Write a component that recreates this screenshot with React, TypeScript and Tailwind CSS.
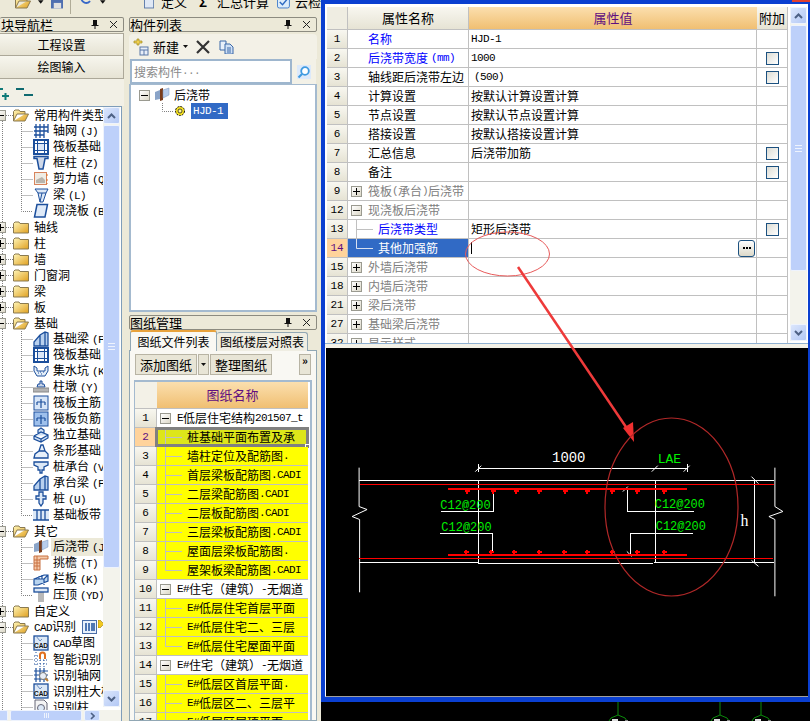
import React from "react";

const BLUE = "#1c4f9c";
const MONO = "font-['Liberation_Mono',monospace] text-[11px] tracking-[-0.6px]";

// SimSun style: half width latin next to full width CJK
function T({ s }: { s: string }) {
  const parts = s.match(/[\x20-\x7e]+|[^\x20-\x7e]+/g) || [];
  return (
    <>
      {parts.map((p, i) =>
        /^[\x20-\x7e]/.test(p) ? (
          <span key={i} className={`${MONO} whitespace-pre ${p.startsWith(" (") ? "ml-[3px]" : ""}`}>
            {p.startsWith(" (") ? p.slice(1) : p}
          </span>
        ) : (
          <span key={i}>{p}</span>
        )
      )}
    </>
  );
}

function Folder({ open }: { open?: boolean }) {
  return (
    <svg width="16" height="13" viewBox="0 0 16 13" className="shrink-0">
      <defs>
        <linearGradient id="fy" x1="0" y1="0" x2="1" y2="1">
          <stop offset="0" stopColor="#fff6b8" />
          <stop offset="1" stopColor="#e0a020" />
        </linearGradient>
      </defs>
      {open ? (
        <path d="M.5 12V2.500L2 1h4l1 1.500h5V5H4L.5 12h11.500L15.500 5H12" fill="url(#fy)" stroke="#8a7a50" />
      ) : (
        <path d="M.5 12V2.500L2 1h4l1 1.500h8.500V12z" fill="url(#fy)" stroke="#8a7a50" />
      )}
    </svg>
  );
}

function TreeIcon({ k }: { k: string }) {
  const s = { fill: "none", stroke: BLUE, strokeWidth: 1 };
  let c: React.ReactNode = null;
  switch (k) {
    case "grid":
      c = <path {...s} strokeWidth={1.300} d="M3 1v14M7 1v14M11 1v14M15 1v9M1 4h14M1 8h14M1 12h10" />;
      break;
    case "raft":
      c = (
        <>
          <rect x="1" y="1" width="14" height="14" fill="#fff" stroke={BLUE} strokeWidth="2" />
          <rect x="4.500" y="4.500" width="7" height="7" fill="#dde8f8" stroke={BLUE} />
          <path {...s} d="M1 4.500h14M1 11.500h14M4.500 1v14M11.500 1v14" />
        </>
      );
      break;
    case "column":
      c = <path d="M1 1.500h14v2h-3L10 14H6L4 3.500H1z" fill="#cfd8e8" stroke={BLUE} strokeWidth="1.500" />;
      break;
    case "wall":
      c = (
        <>
          <rect x="1.500" y="1.500" width="12" height="12" fill="#efece4" stroke="#d8845c" />
          <path d="M3 12h9v-3L9 6 3 9z" fill="#b8b4ac" />
          <path d="M14 3v2M14 8v2M14 12v1" stroke="#e07020" />
        </>
      );
      break;
    case "beam":
      c = <path d="M2 2h13l-2 4-3 9H7L5 6zM5 6h8M9 6l-2 9" fill="#dce8f6" stroke={BLUE} />;
      break;
    case "slab":
      c = <path d="M4 1.500h10.500L12 14H1.500z" fill="#dfeaf8" stroke={BLUE} strokeWidth="1.500" />;
      break;
    case "fbeam":
      c = <path d="M1 15V11l6-7 5-3 3 1v13zM7 4v11M12 1v14" fill="#b8d0ee" stroke={BLUE} strokeWidth="1.300" />;
      break;
    case "pit":
      c = (
        <>
          <path d="M1 3l3 2v3h8V5l3-2v5l-3 5H4L1 8z" fill="#e4eef8" stroke={BLUE} />
          <path d="M5 10h1M8 11h1M10 9h1M7 9h1" stroke={BLUE} />
        </>
      );
      break;
    case "pier":
      c = (
        <>
          <path d="M7 2h2v3h2l1 3H4l1-3h2z" fill="#c8d4e8" stroke={BLUE} />
          <rect x="0" y="9" width="16" height="4" fill="#b4b4b4" stroke="#888" />
        </>
      );
      break;
    case "main":
    case "neg":
      c = (
        <>
          <rect x="1" y="1" width="14" height="14" fill={k === "neg" ? "#9ec0ec" : "#d8e6f8"} stroke={BLUE} />
          <path d="M4 7h8M8 4v9M4 7v3M12 7v3" fill="none" stroke={BLUE} strokeWidth="1.200" />
        </>
      );
      break;
    case "iso":
      c = <path d="M1 9l7-4 7 3v3l-7 4-7-3zM1 9l7 3 7-4M8 12v3M5 7V3l3-2 3 2v4" fill="#cfe0f5" stroke={BLUE} strokeWidth="1.200" />;
      break;
    case "strip":
      c = <path d="M1 15l1-4 4-3 2-6h2l2 6 3 3v4zM6 8h6" fill="#e8f0fa" stroke={BLUE} strokeWidth="1.300" />;
      break;
    case "cap":
      c = <path d="M1 3h14v3l-4 2v3H9v3H7v-3H5V8L1 6z" fill="#dce8f6" stroke={BLUE} strokeWidth="1.300" />;
      break;
    case "pile":
      c = <path d="M6 1h4v4h3v3h-3v4l-2 3-2-3V8H3V5h3z" fill="#dce8f6" stroke={BLUE} strokeWidth="1.300" />;
      break;
    case "band":
      c = (
        <>
          <rect x="0" y="3" width="16" height="10" fill="#dce8f6" />
          <path d="M0 3h16M0 13h16M4 3v10M8 3v10M12 3v10" stroke={BLUE} strokeWidth="1.300" />
        </>
      );
      break;
    case "post":
      c = (
        <>
          <path d="M1 5l5-2v9l-5 1z" fill="#8aa4c8" />
          <path d="M6 2l3-1v12l-3 1z" fill="#7a3c1c" />
          <path d="M9 3l6-2v7l-6 3z" fill="#b8cdec" stroke="#7a94bc" strokeWidth=".500" />
        </>
      );
      break;
    case "eave":
      c = (
        <>
          <path d="M1 1h14v3H7v11H1z" fill="#f4c8a8" stroke="#c87040" />
          <path d="M1 5h6M1 8h6M1 11h6M4 1v14" stroke="#c87040" />
        </>
      );
      break;
    case "rail":
      c = <path d="M1 8l10-4h4v6l-10 4H1zM1 8h10l4-4M11 8v6M6 8V5M9 8V4" fill="#b8d4f0" stroke={BLUE} strokeWidth="1.200" />;
      break;
    case "coping":
      c = (
        <>
          <rect x="5" y="4" width="6" height="11" fill="#b8b8b8" />
          <rect x="1" y="1" width="14" height="4" fill="#dce8f6" stroke={BLUE} strokeWidth="1.300" />
        </>
      );
      break;
    case "cad":
    case "idcad":
      c = (
        <>
          <rect x="1" y="1" width="14" height="14" fill="#dce8f6" stroke={BLUE} strokeWidth="1.300" />
          <path d="M3 1l4 5 2-2" fill="none" stroke="#6a8cc0" />
          <text x="8" y="13" textAnchor="middle" fontSize="6.500" fontWeight="700" fill="#111" fontFamily="Liberation Sans, sans-serif">CAD</text>
        </>
      );
      break;
    case "smart":
      c = (
        <>
          <path d="M1 5h4M1 9h15M1 13h15M3 1v15M7 9v7M11 9v7" stroke={BLUE} strokeDasharray="1 2" />
          <path d="M6 8V4a3.500 3.500 0 0 1 7 0v4h-2V4a1.500 1.500 0 0 0-3 0v4z" fill="#e07020" />
        </>
      );
      break;
    case "idgrid":
      c = (
        <>
          <path {...s} strokeWidth={1.200} d="M3 1v14M7 1v14M11 1v14M1 4h14M1 8h14M1 12h14" />
          <circle cx="10" cy="9" r="3.500" fill="#e8eef6" stroke="#777" />
          <path d="M12.500 11.500L15 14" stroke="#c08030" strokeWidth="2" />
        </>
      );
      break;
    case "idcol":
      c = (
        <>
          <path d="M2 1h9l3 3v11H2z" fill="#f4f4f4" stroke="#667" />
          <circle cx="8" cy="9" r="3.500" fill="#dce8f6" stroke="#667" />
        </>
      );
      break;
  }
  return <svg width="16" height="16" viewBox="0 0 16 16" className="shrink-0">{c}</svg>;
}

type Row = { l: string; k?: string; f?: "o" | "c"; last?: boolean; hi?: boolean };

const NAV: Row[] = [
  { l: "常用构件类型", f: "o" },
  { l: "轴网 (J)", k: "grid" },
  { l: "筏板基础 (M)", k: "raft" },
  { l: "框柱 (Z)", k: "column" },
  { l: "剪力墙 (Q)", k: "wall" },
  { l: "梁 (L)", k: "beam" },
  { l: "现浇板 (B)", k: "slab", last: true },
  { l: "轴线", f: "c" },
  { l: "柱", f: "c" },
  { l: "墙", f: "c" },
  { l: "门窗洞", f: "c" },
  { l: "梁", f: "c" },
  { l: "板", f: "c" },
  { l: "基础", f: "o" },
  { l: "基础梁 (F)", k: "fbeam" },
  { l: "筏板基础 (M)", k: "raft" },
  { l: "集水坑 (K)", k: "pit" },
  { l: "柱墩 (Y)", k: "pier" },
  { l: "筏板主筋 (R)", k: "main" },
  { l: "筏板负筋 (X)", k: "neg" },
  { l: "独立基础 (D)", k: "iso" },
  { l: "条形基础 (T)", k: "strip" },
  { l: "桩承台 (V)", k: "cap" },
  { l: "承台梁 (F)", k: "fbeam" },
  { l: "桩 (U)", k: "pile" },
  { l: "基础板带 (W)", k: "band", last: true },
  { l: "其它", f: "o" },
  { l: "后浇带 (JD)", k: "post", hi: true },
  { l: "挑檐 (T)", k: "eave" },
  { l: "栏板 (K)", k: "rail" },
  { l: "压顶 (YD)", k: "coping", last: true },
  { l: "自定义", f: "c" },
  { l: "CAD识别", f: "o" },
  { l: "CAD草图", k: "cad" },
  { l: "智能识别", k: "smart" },
  { l: "识别轴网", k: "idgrid" },
  { l: "识别柱大样", k: "idcad" },
  { l: "识别柱", k: "idcol" },
];

function Box({ open }: { open?: boolean }) {
  return (
    <span className="w-[11px] h-[11px] shrink-0 border border-[#9a9a90] bg-[linear-gradient(135deg,#ffffff,#dcd8c8)] flex items-center justify-center relative">
      <span className="w-[7px] h-px bg-black" />
      {!open && <span className="absolute w-px h-[7px] bg-black" />}
    </span>
  );
}

function NavRow({ r }: { r: Row }) {
  if (r.f) {
    return (
      <div className="h-4 flex items-center whitespace-nowrap">
        <div className="w-[13px] shrink-0 flex items-center">
          <div className="-ml-[5px]"><Box open={r.f === "o"} /></div>
          <div className="flex-1 border-t border-dotted border-[#808080]" />
        </div>
        <Folder open={r.f === "o"} />
        <span className="ml-[5px]"><T s={r.l} /></span>
        {r.l === "CAD识别" && (
          <>
            <svg width="15" height="14" viewBox="0 0 15 14" className="ml-[6px] shrink-0">
              <rect x=".5" y=".5" width="14" height="13" fill="#e8f0fa" stroke="#4a6ea8" />
              <path d="M4 3v8M7 3v8M10 3v8M12 3v8" stroke={BLUE} strokeWidth="1.500" />
            </svg>
            <svg width="6" height="8" viewBox="0 0 6 8" className="ml-px -mt-[6px] shrink-0">
              <path d="M0 0h2l4 4-4 4H0z" fill="#f0c820" stroke="#806000" strokeWidth=".500" />
            </svg>
          </>
        )}
      </div>
    );
  }
  return (
    <div className="h-4 flex items-center whitespace-nowrap">
      <svg width="33" height="16" className="shrink-0">
        <path d={r.last ? "M21.500 0v8.500H33" : "M21.500 0v16M21.500 8.500H33"} fill="none" stroke="#808080" strokeDasharray="1 1" />
      </svg>
      <TreeIcon k={r.k!} />
      <span className={`ml-[2px] pl-[2px] flex-1 ${r.hi ? "bg-[#ece9d8]" : ""}`}>
        <T s={r.l} />
      </span>
    </div>
  );
}

function Title({ text, className }: { text: string; className: string }) {
  return (
    <div className={`h-[15px] border border-[#8c8b80] rounded-[2px] flex items-center text-[13px] leading-none bg-[#ece9d8] ${className}`}>
      <span className="whitespace-nowrap">{text}</span>
      <svg width="8" height="11" viewBox="0 0 8 11" className="ml-auto">
        <path d="M2 1h4v5h1.500v1h-3v3h-1V7h-3V6H2z" fill="#111" />
      </svg>
      <svg width="9" height="9" viewBox="0 0 9 9" className="ml-[10px] mr-[5px]">
        <path d="M1 1l7 7M8 1L1 8" stroke="#222" />
      </svg>
    </div>
  );
}

function ScrollBtn({ up }: { up?: boolean }) {
  return (
    <div className="h-[17px] shrink-0 border border-[#eef3fd] rounded-[2px] bg-[linear-gradient(135deg,#dbe6fc,#b3c8f5)] flex items-center justify-center">
      <svg width="9" height="6" viewBox="0 0 9 6">
        <path d={up ? "M1 5l3.500-3.500L8 5" : "M1 1l3.500 3.500L8 1"} fill="none" stroke="#4d6185" strokeWidth="2" />
      </svg>
    </div>
  );
}

function VScroll({ thumb, className }: { thumb: string; className: string }) {
  return (
    <div className={`flex flex-col bg-[#f3f3ec] ${className}`}>
      <ScrollBtn up />
      <div className={`${thumb} mt-[1px] shrink-0 border border-[#eef3fd] rounded-[2px] bg-[#bdd0fa] flex items-center justify-center`}>
        <div className="w-[7px] h-[7px] border-y border-[#eef3fd] flex items-center"><div className="w-full h-px bg-[#eef3fd]" /></div>
      </div>
      <div className="flex-1" />
      <ScrollBtn />
    </div>
  );
}

function LeftPanel() {
  return (
    <div className="w-[125px] h-[704px] shrink-0 flex flex-col">
      <Title text="块导航栏" className="w-[124px] border-l-0 pl-[1px]" />
      <div className="mt-[1px] h-[23px] w-[124px] border border-l-0 border-[#aca899] bg-[linear-gradient(#f7f6ee,#e6e3d4)] flex items-center justify-center">工程设置</div>
      <div className="h-[23px] w-[124px] border border-l-0 border-t-0 border-[#aca899] bg-[linear-gradient(#f7f6ee,#e6e3d4)] flex items-center justify-center">绘图输入</div>
      <div className="h-[27px] w-[124px] bg-[#f2f0e6] flex items-center gap-[7px]">
        <svg width="9" height="16" viewBox="0 0 9 16">
          <path d="M0 4h3M2 11h7M5.500 8v7" stroke="#0f7a78" strokeWidth="2" />
        </svg>
        <svg width="17" height="12" viewBox="0 0 17 12">
          <path d="M0 2h8M8 8h9" stroke="#0f6a70" strokeWidth="2" />
        </svg>
      </div>
      <div className="w-[122px] h-[604px] shrink-0 border-t border-r border-[#7f9db9] flex bg-white">
        <div className="w-[103px] overflow-hidden relative">
          <div className="absolute left-[2px] top-[8px] bottom-0 border-l border-dotted border-[#808080]" />
          <div className="relative text-[12px] leading-4 text-black">
            {NAV.map((r, i) => <NavRow key={i} r={r} />)}
          </div>
        </div>
        <VScroll thumb="h-[443px]" className="w-[17px] h-[600px]" />
      </div>
      <div className="h-[11px] w-[122px] shrink-0 bg-[#f3f3ec] border-r border-[#7f9db9] flex gap-[2px]">
        <div className="w-[8px] rounded-r-[2px] bg-[#c3d5fb] border border-l-0 border-[#eef3fd]" />
        <div className="w-[72px] rounded-[2px] bg-[#bdd0fa] border border-[#eef3fd] flex justify-center items-center gap-px">
          <span className="w-px h-[5px] bg-[#eef3fd]" />
          <span className="w-px h-[5px] bg-[#eef3fd]" />
          <span className="w-px h-[5px] bg-[#eef3fd]" />
        </div>
        <div className="w-[16px] rounded-[2px] bg-[#c3d5fb] border border-[#eef3fd] flex items-center justify-center">
          <svg width="5" height="8" viewBox="0 0 5 8"><path d="M1 1l3 3-3 3" fill="none" stroke="#4d6185" strokeWidth="1.600" /></svg>
        </div>
      </div>
    </div>
  );
}

function MidPanel() {
  return (
    <div className="w-[190px] h-[704px] shrink-0 flex flex-col pl-[1px] pr-[1px] overflow-hidden">
      <Title text="构件列表" className="w-[188px]" />
      <div className="mt-[2px] h-[25px] rounded-t-[4px] bg-[#f3f1e7] flex items-center text-[13px]">
        <svg width="17" height="18" viewBox="0 0 17 18" className="ml-[3px]">
          <path d="M2 3h3V1h2v2h3v2H7v2H5V5H2z" fill="#f0d050" stroke="#a08a20" strokeWidth=".700" />
          <rect x="8" y="9" width="8" height="8" fill="#e8eef8" stroke="#5a78a8" />
          <path d="M8 12h8M12 12v5" stroke="#5a78a8" />
        </svg>
        <span className="ml-[4px]">新建</span>
        <svg width="5" height="3" viewBox="0 0 5 3" className="ml-[4px]"><path d="M0 0h5L2.500 3z" fill="#111" /></svg>
        <svg width="14" height="14" viewBox="0 0 14 14" className="ml-[8px]">
          <path d="M1 1l12 12M13 1L1 13" stroke="#333" strokeWidth="2.200" />
        </svg>
        <svg width="15" height="14" viewBox="0 0 15 14" className="ml-[9px]">
          <path d="M1 1h6v9H1z" fill="#e8f0fa" stroke="#3a68a8" />
          <path d="M6 4h5l3 3v7H6z" fill="#cfe0f5" stroke="#3a68a8" />
          <path d="M8 8h4M8 10h4M8 12h4" stroke="#3a68a8" />
        </svg>
      </div>
      <div className="h-[25px] flex bg-[#ece9d8]">
        <div className="w-[162px] ml-[1px] border-2 border-[#9eb6ce] bg-white text-[#8a8a8a] text-[12px] flex items-center pl-[2px]">
          <T s="搜索构件..." />
        </div>
        <div className="w-[24px] bg-[#f3f1e7] flex items-center justify-center">
          <svg width="14" height="14" viewBox="0 0 14 14">
            <rect width="14" height="14" fill="#dce9fa" />
            <circle cx="8" cy="6" r="3.800" fill="#fff" stroke="#3f9ae0" strokeWidth="1.800" />
            <path d="M5 9l-3.500 3.500" stroke="#3f9ae0" strokeWidth="2.200" />
          </svg>
        </div>
      </div>
      <div className="h-[228px] w-[188px] shrink-0 border-2 border-t border-[#a4bacf] bg-white text-[12px] pt-[2px]">
        <div className="h-4 flex items-center pl-[8px]">
          <Box open />
          <span className="ml-[4px]"><TreeIcon k="post" /></span>
          <span className="ml-[4px]">后浇带</span>
        </div>
        <div className="h-4 flex items-center pl-[30px]">
          <svg width="12" height="16" className="shrink-0">
            <path d="M1.500 0v8.500H12" fill="none" stroke="#808080" strokeDasharray="1 1" />
          </svg>
          <svg width="12" height="12" viewBox="0 0 12 12" className="ml-[1px] shrink-0">
            <circle cx="6" cy="6" r="4.500" fill="#f4e020" stroke="#111" strokeWidth="1" strokeDasharray="2 1" />
            <circle cx="6" cy="6" r="2" fill="#fff8a0" stroke="#111" strokeWidth=".700" />
          </svg>
          <span className="ml-[5px] w-[37px] h-4 bg-[#316ac5] text-white flex items-center pl-[2px]"><T s="HJD-1" /></span>
        </div>
      </div>
      <Title text="图纸管理" className="w-[188px] mt-[3px] shrink-0" />
      <div className="h-[21px] flex items-end shrink-0 text-[12px] -mb-px relative">
        <div className="w-[87px] h-[21px] ml-[1px] bg-[#f9f8f3] border border-b-0 border-[#91a7b4] border-t-2 border-t-[#e8a23c] rounded-t-[3px] flex items-center justify-center z-10">图纸文件列表</div>
        <div className="w-[91px] h-[19px] bg-[#efede2] border border-b-0 border-l-0 border-[#91a7b4] rounded-t-[3px] flex items-center justify-center">图纸楼层对照表</div>
      </div>
      <div className="flex-1 min-h-0 border border-[#91a7b4] bg-[#f9f8f3] px-[4px] pt-[2px] overflow-hidden">
        <div className="h-[23px] flex items-center text-[13px] ml-px gap-px">
          <div className="w-[62px] h-[21px] bg-[#e8e5d6] border border-[#b8b4a4] flex items-center justify-center">添加图纸</div>
          <div className="w-[11px] h-[21px] bg-[#e8e5d6] border border-[#b8b4a4] flex items-center justify-center">
            <svg width="5" height="3" viewBox="0 0 5 3"><path d="M0 0h5L2.500 3z" fill="#111" /></svg>
          </div>
          <div className="w-[62px] h-[21px] bg-[#e8e5d6] border border-[#b8b4a4] flex items-center justify-center">整理图纸</div>
          <div className="w-[12px] h-[21px] ml-auto mr-[1px] bg-[#e8e5d6] border border-[#b8b4a4] text-[11px] font-bold leading-[11px] text-center">»</div>
        </div>
        <div className="mt-[4px] border-t-2 border-l border-r-2 border-[#a4bacf] bg-white pr-[2px]">
          <div className="h-[27px] flex border-b border-[#c0c0c0]">
            <div className="w-[22px] shrink-0 bg-[#f3f1e7]" />
            <div className="flex-1 bg-[linear-gradient(#fbdfae,#f0bf72)] text-[#5f0f80] text-[13px] flex items-center justify-center">图纸名称</div>
          </div>
          {DRAWINGS.map((d, i) => <DrawRow key={i} n={d.n} l={d.l} kind={d.kind} />)}
        </div>
      </div>
    </div>
  );
}

const DRAWINGS: { n: number; l: string; kind: string }[] = [
  { n: 1, l: "E低层住宅结构201507_t", kind: "head" },
  { n: 2, l: "桩基础平面布置及承", kind: "sel" },
  { n: 3, l: "墙柱定位及配筋图.", kind: "mid" },
  { n: 4, l: "首层梁板配筋图.CADI", kind: "mid" },
  { n: 5, l: "二层梁配筋图.CADI", kind: "mid" },
  { n: 6, l: "二层板配筋图.CADI", kind: "mid" },
  { n: 7, l: "三层梁板配筋图.CADI", kind: "mid" },
  { n: 8, l: "屋面层梁板配筋图.", kind: "mid" },
  { n: 9, l: "屋架板梁配筋图.CADI", kind: "last" },
  { n: 10, l: "E#住宅（建筑）-无烟道", kind: "head" },
  { n: 11, l: "E#低层住宅首层平面", kind: "mid" },
  { n: 12, l: "E#低层住宅二、三层", kind: "mid" },
  { n: 13, l: "E#低层住宅屋面平面", kind: "last" },
  { n: 14, l: "E#住宅（建筑）-无烟道", kind: "head" },
  { n: 15, l: "E#低层区首层平面.", kind: "mid" },
  { n: 16, l: "E#低层区二、三层平", kind: "mid" },
  { n: 17, l: "E#低层区屋项平面", kind: "mid" },
];

function DrawRow({ n, l, kind }: { n: number; l: string; kind: string }) {
  const sel = kind === "sel";
  const head = kind === "head";
  return (
    <div className="h-[19px] flex border-b border-[#c0c0c0] text-[12px] leading-[18px] relative">
      <div className={`w-[22px] shrink-0 flex items-center justify-center font-['Liberation_Mono',monospace] text-[11px] border-r border-[#c0c0c0] ${sel ? "bg-[#ffd39b] text-[#5f0f80]" : "bg-[linear-gradient(#f8f7f0,#e6e3d4)]"}`}>
        {n}
      </div>
      <div className={`flex-1 flex items-center whitespace-nowrap overflow-hidden ${head ? "bg-white" : sel ? "bg-[#dde61a]" : "bg-[#ffff00]"}`}>
        {head ? (
          <span className="ml-[3px] mr-[6px]"><Box open /></span>
        ) : (
          <svg width="30" height="19" className="shrink-0">
            <path d={kind === "last" ? "M8.500 0v9.500H25" : "M8.500 0v19M8.500 9.500H25"} fill="none" stroke="#c0c0c0" />
          </svg>
        )}
        <T s={l} />
      </div>
      {sel && (
        <>
          <span className="absolute left-[20px] -right-px -top-px -bottom-px border-[3px] border-[#808080]" />
          <span className="absolute -right-[2px] -bottom-[3px] w-[5px] h-[5px] bg-[#808080] border border-white" />
        </>
      )}
    </div>
  );
}

const PROPS: { n: number; l: string; v?: string; kind?: string; check?: boolean }[] = [
  { n: 1, l: "名称", v: "HJD-1", kind: "blue" },
  { n: 2, l: "后浇带宽度 (mm)", v: "1000", kind: "blue", check: true },
  { n: 3, l: "轴线距后浇带左边", v: " (500)", check: true },
  { n: 4, l: "计算设置", v: "按默认计算设置计算" },
  { n: 5, l: "节点设置", v: "按默认节点设置计算" },
  { n: 6, l: "搭接设置", v: "按默认搭接设置计算" },
  { n: 7, l: "汇总信息", v: "后浇带加筋", check: true },
  { n: 8, l: "备注", check: true },
  { n: 9, l: "筏板(承台)后浇带", kind: "plus" },
  { n: 12, l: "现浇板后浇带", kind: "minus" },
  { n: 13, l: "后浇带类型", v: "矩形后浇带", kind: "sub", check: true },
  { n: 14, l: "其他加强筋", kind: "sel" },
  { n: 15, l: "外墙后浇带", kind: "plus" },
  { n: 18, l: "内墙后浇带", kind: "plus" },
  { n: 21, l: "梁后浇带", kind: "plus" },
  { n: 27, l: "基础梁后浇带", kind: "plus" },
  { n: 32, l: "显示样式", kind: "plus" },
];

function Check() {
  return <span className="w-[13px] h-[13px] border border-[#1c5180] bg-[linear-gradient(135deg,#dcdcd4,#ffffff)]" />;
}

function PropRow({ p }: { p: (typeof PROPS)[number] }) {
  const sel = p.kind === "sel";
  const sub = p.kind === "sub" || sel;
  const tree = p.kind === "plus" || p.kind === "minus";
  return (
    <div className="h-[19px] flex border-b border-[#c0c0c0] text-[12px] shrink-0">
      <div className={`w-[21px] shrink-0 border-r border-[#c0c0c0] flex items-center justify-center font-['Liberation_Mono',monospace] text-[11px] ${sel ? "bg-[#ffd39b] text-[#5f0f80]" : "bg-[linear-gradient(#f8f7f0,#e6e3d4)]"}`}>
        {p.n}
      </div>
      <div className={`w-[121px] shrink-0 border-r border-[#c0c0c0] flex items-center whitespace-nowrap overflow-hidden ${sel ? "bg-[#316ac5] text-white" : p.kind === "blue" || p.kind === "sub" ? "text-[#0000ff]" : tree ? "text-[#808080]" : "text-black"}`}>
        {tree && <span className="ml-[3px] mr-[6px]"><Box open={p.kind === "minus"} /></span>}
        {sub && (
          <svg width="30" height="19" className="shrink-0">
            <path d={sel ? "M8.500 0v9.500H25" : "M8.500 0v19M8.500 9.500H25"} fill="none" stroke={sel ? "#d8e0f0" : "#c0c0c0"} />
          </svg>
        )}
        {!tree && !sub && <span className="w-[20px] shrink-0" />}
        <T s={p.l} />
      </div>
      <div className="w-[288px] shrink-0 border-r border-[#c0c0c0] flex items-center pl-[2px] whitespace-pre text-black">
        {sel ? (
          <>
            <span className="w-px h-3 bg-black" />
            <span className="ml-auto mr-px w-[17px] h-[17px] border border-[#1c5180] rounded-[3px] bg-[linear-gradient(#ffffff,#dcd8c8)] flex items-center justify-center gap-px">
              <span className="w-[2px] h-[2px] bg-black" />
              <span className="w-[2px] h-[2px] bg-black" />
              <span className="w-[2px] h-[2px] bg-black" />
            </span>
          </>
        ) : (
          p.v && <T s={p.v} />
        )}
      </div>
      <div className="w-[31px] shrink-0 border-r border-[#c0c0c0] flex items-center justify-center">
        {p.check && <Check />}
      </div>
    </div>
  );
}

function PropertyGrid() {
  return (
    <div className="h-[339px] shrink-0 bg-white pl-[2px] pt-[3px] flex overflow-hidden">
      <div className="w-[461px] shrink-0 flex flex-col">
        <div className="h-[23px] shrink-0 flex border-b border-[#c0c0c0] text-[13px]">
          <div className="w-[21px] border-r border-[#c0c0c0] bg-[#efede2]" />
          <div className="w-[121px] border-r border-[#c0c0c0] bg-[linear-gradient(#f8f7f0,#e6e3d4)] flex items-center justify-center">属性名称</div>
          <div className="w-[288px] bg-[linear-gradient(#fbdfae,#f0bf72)] text-[#5f0f80] flex items-center justify-center">属性值</div>
          <div className="w-[31px] border-r border-[#c0c0c0] bg-[linear-gradient(#f8f7f0,#e6e3d4)] flex items-center justify-center">附加</div>
        </div>
        {PROPS.map((p) => <PropRow key={p.n} p={p} />)}
      </div>
      <VScroll thumb="h-[246px]" className="w-[17px] ml-[2px] h-[334px]" />
    </div>
  );
}

const TOP_DOTS = [467, 493, 516, 539, 565, 587, 612, 637, 664];
const BOT_DOTS = [466, 491, 514, 539, 564, 587, 612, 637, 664];

function CadDrawing() {
  const w = { stroke: "#fff", fill: "none", strokeWidth: 1 };
  return (
    <svg viewBox="326 348 482 349" className="w-full h-full block" shapeRendering="crispEdges">
      <path {...w} d="M358.500 468v39l8 3-15 7 7.500 3v73" shapeRendering="auto" />
      <path {...w} d="M775.500 468v39l8 5-14 5 6 3v77" shapeRendering="auto" />
      <path {...w} d="M358 480.500h417M358 563.500h120M478 564.500h175M654 563.500h121M478.500 481v83M655.500 481v82M478 468.500h209M478.500 464v8M687.500 464v8" />
      <path {...w} d="M441 511.500h52.500V493M440 534.500h52.500V553M694 511.500h-66.500V488M693 534.500h-62.500V555M755.500 480v83" />
      <path {...w} shapeRendering="auto" d="M475 472l6-6M652 472l6-6M684 472l6-6M623 492l5-5M627 552l5 5M752 477l7 7M752 561l7 6" />
      <path d="M359 484.500h416M358 559.500h416" stroke="#f00" fill="none" />
      <path d="M448 489h239M448 556h239" stroke="#f00" strokeWidth="2" fill="none" />
      {TOP_DOTS.map((x) => <path key={x} d={`M${x - 2} 491h5M${x} 489v5`} stroke="#f00" strokeWidth="2" />)}
      {BOT_DOTS.map((x) => <path key={x} d={`M${x - 2} 553h5M${x} 551v5`} stroke="#f00" strokeWidth="2" />)}
      <g fontFamily="Liberation Mono, monospace" fontSize="12" fill="#00f000">
        <text x="440" y="509">C12@200</text>
        <text x="441" y="532">C12@200</text>
        <text x="655" y="508">C12@200</text>
        <text x="656" y="531">C12@200</text>
        <text x="658" y="463" fontSize="13">LAE</text>
      </g>
      <text x="552" y="462" fontFamily="Liberation Mono, monospace" fontSize="14" fill="#fff">1000</text>
      <text x="741" y="527" fontFamily="Liberation Serif, serif" fontSize="16" fill="#fff">h</text>
    </svg>
  );
}

function Hex({ className }: { className: string }) {
  return (
    <svg width="24" height="19" viewBox="0 0 24 19" className={className}>
      <path d="M12 0v13M3 19l2-3 7-3 7 3 2 3" stroke="#0a8a0a" fill="none" />
      <rect x="6" y="17" width="6" height="2" fill="#ddd" />
      <rect x="19" y="18" width="3" height="1" fill="#888" />
    </svg>
  );
}

export default function App() {
  return (
    <div className="relative w-[810px] h-[721px] overflow-hidden flex bg-[#ece9d8] font-['Noto_Sans_CJK_SC',sans-serif] text-[12px] text-black">
      <div className="w-[321px] shrink-0 flex flex-col">
        <div className="h-[17px] shrink-0 overflow-hidden">
          <div className="-mt-[7px] h-[18px] flex items-center whitespace-nowrap">
            <span className="ml-[15px]"><Folder open /></span>
            <svg width="6" height="4" viewBox="0 0 6 4" className="ml-[7px]"><path d="M0 0h6L3 4z" fill="#111" /></svg>
            <svg width="14" height="14" viewBox="0 0 14 14" className="ml-[7px]"><rect width="14" height="14" fill="#4f6fb0" /><rect x="3" y="8" width="8" height="6" fill="#e0e0e0" /></svg>
            <span className="ml-[7px] w-px h-[24px] bg-[#b0ac98]" />
            <svg width="12" height="14" viewBox="0 0 12 14" className="ml-[9px]"><path d="M1 2c1 6 6 8 10 4" fill="none" stroke="#3868c8" strokeWidth="2" /></svg>
            <svg width="6" height="4" viewBox="0 0 6 4" className="ml-[9px]"><path d="M0 0h6L3 4z" fill="#111" /></svg>
            <svg width="11" height="14" viewBox="0 0 11 14" className="ml-[38px]"><rect x=".5" y=".5" width="10" height="13" fill="#dfe8f5" stroke="#5a78a8" /></svg>
            <span className="ml-[7px] text-[13px]">定义</span>
            <span className="ml-[12px] font-bold text-[13px]">Σ</span>
            <span className="ml-[10px] text-[13px]">汇总计算</span>
            <svg width="14" height="14" viewBox="0 0 14 14" className="ml-[8px]"><rect x=".5" y=".5" width="13" height="13" rx="2" fill="#dcecfa" stroke="#3a78c8" /><path d="M3 7l3 3 5-6" stroke="#2a68c0" fill="none" strokeWidth="1.500" /></svg>
            <span className="ml-[5px] text-[13px]">云检</span>
          </div>
        </div>
        <div className="flex flex-1 min-h-0">
          <LeftPanel />
          <div className="w-[3px] shrink-0" />
          <MidPanel />
        </div>
      </div>

      <div className="w-[489px] shrink-0 flex flex-col bg-black">
        <div className="h-[702px] shrink-0 flex flex-col border-[4px] border-r-[2px] border-b-[5px] border-[#0a3fd0]">
          <PropertyGrid />
          <div className="h-[5px] shrink-0 border-t border-[#8fb0d0] bg-[#f3f1e7]" />
          <div className="flex-1 min-h-0 bg-black border-l border-b border-white border-b-[#a0a0a0]">
            <CadDrawing />
          </div>
        </div>
        <div className="flex-1 flex items-start">
          <Hex className="ml-[285px]" />
          <Hex className="ml-[78px]" />
          <Hex className="ml-[17px]" />
        </div>
      </div>

      {/* hand drawn annotations lie over both panes */}
      <svg width="810" height="721" className="absolute inset-0 pointer-events-none">
        <ellipse cx="507.500" cy="254" rx="42" ry="22" fill="none" stroke="#e85a5a" strokeWidth="1" />
        <path d="M518 267L628 430" stroke="#ee3a3a" strokeWidth="2.500" fill="none" />
        <path d="M623 428l10-6 1 20z" fill="#f03030" />
        <ellipse cx="671.500" cy="507" rx="66.500" ry="89" fill="none" stroke="#b02828" strokeWidth="1.200" />
        <rect x="792" y="0" width="18" height="2" fill="#e04030" />
      </svg>
    </div>
  );
}
